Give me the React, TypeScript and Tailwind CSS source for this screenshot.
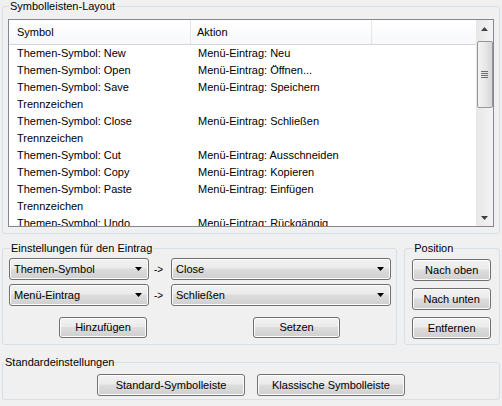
const rows: [string, string][] = [
  ["Themen-Symbol: New", "Menü-Eintrag: Neu"],
  ["Themen-Symbol: Open", "Menü-Eintrag: Öffnen..."],
  ["Themen-Symbol: Save", "Menü-Eintrag: Speichern"],
  ["Trennzeichen", ""],
  ["Themen-Symbol: Close", "Menü-Eintrag: Schließen"],
  ["Trennzeichen", ""],
  ["Themen-Symbol: Cut", "Menü-Eintrag: Ausschneiden"],
  ["Themen-Symbol: Copy", "Menü-Eintrag: Kopieren"],
  ["Themen-Symbol: Paste", "Menü-Eintrag: Einfügen"],
  ["Trennzeichen", ""],
  ["Themen-Symbol: Undo", "Menü-Eintrag: Rückgängig"],
];

const btn =
  "rounded-[3px] border border-[#707070] bg-[linear-gradient(#f2f2f2_0%,#ebebeb_45%,#dddddd_50%,#cfcfcf_100%)] text-[11px] leading-none text-black shadow-[inset_0_0_0_1px_#fcfcfc]";

function Group({ label, className, children }: { label: string; className?: string; children: React.ReactNode }) {
  return (
    <fieldset className={`rounded-[3px] border border-[#d5dfe5] ${className ?? ""}`}>
      <legend className="ml-[1px] px-[1px] text-[11px] leading-[13px] text-black">{label}</legend>
      {children}
    </fieldset>
  );
}

function Arrow({ up }: { up?: boolean }) {
  return (
    <svg width="7" height="4" viewBox="0 0 7 4">
      <path d={up ? "M0 4 L3.5 0 L7 4 Z" : "M0 0 L7 0 L3.5 4 Z"} fill="#404040" />
    </svg>
  );
}

function Combo({ value, width }: { value: string; width: string }) {
  return (
    <div className={`${btn} ${width} flex h-[22px] items-center justify-between pl-[4px] pr-[6px]`}>
      <span>{value}</span>
      <svg width="7" height="4" viewBox="0 0 7 4">
        <path d="M0 0 L7 0 L3.5 4 Z" fill="#000" />
      </svg>
    </div>
  );
}

export default function App() {
  return (
    <div className="h-[406px] w-[502px] overflow-hidden bg-[#f0f0f0] px-[2px] text-[11px] text-black [font-family:'Liberation_Sans',Arial,sans-serif]">
      <Group label="Symbolleisten-Layout" className="px-[5px] pb-[6px]">
        <div className="mt-[6px] flex h-[208px] border border-[#828790] bg-white">
          <div className="flex-1 overflow-hidden">
            <div className="flex h-[25px] border-b border-[#d5d5d5] bg-[linear-gradient(#ffffff,#f7f8fa)]">
              <div className="flex w-[182px] items-center border-r border-[#e3e5e8] pl-[8px]">Symbol</div>
              <div className="flex w-[181px] items-center border-r border-[#e3e5e8] pl-[6px]">Aktion</div>
              <div className="flex-1" />
            </div>
            {rows.map(([a, b], i) => (
              <div key={i} className="flex h-[17px] items-center">
                <div className="w-[182px] pl-[8px] whitespace-nowrap">{a}</div>
                <div className="w-[181px] pl-[7px] whitespace-nowrap">{b}</div>
              </div>
            ))}
          </div>
          <div className="flex w-[17px] flex-col items-center bg-[linear-gradient(90deg,#e7e7e7,#f3f3f3)]">
            <div className="flex h-[17px] w-full items-center justify-center">
              <Arrow up />
            </div>
            <div className="mt-[4px] flex h-[67px] w-[16px] items-center justify-center rounded-[2px] border border-[#979797] bg-[linear-gradient(90deg,#f3f3f3,#e8e8e8_50%,#d6d6d6)]">
              <div className="flex flex-col gap-[1px]">
                <div className="h-px w-[7px] bg-[#6f6f6f]" />
                <div className="h-px w-[7px] bg-[#6f6f6f]" />
                <div className="h-px w-[7px] bg-[#6f6f6f]" />
                <div className="h-px w-[7px] bg-[#6f6f6f]" />
              </div>
            </div>
            <div className="flex-1" />
            <div className="flex h-[17px] w-full items-center justify-center">
              <Arrow />
            </div>
          </div>
        </div>
      </Group>

      <div className="mt-[8px] flex gap-[7px]">
        <Group label="Einstellungen für den Eintrag" className="w-[396px] pb-[6px] pl-[6px]">
          <div className="mt-[3px] flex flex-col gap-[4px]">
            <div className="flex items-center">
              <Combo value="Themen-Symbol" width="w-[140px]" />
              <span className="w-[22px] pl-[5px] text-[10px]">-&gt;</span>
              <Combo value="Close" width="w-[220px]" />
            </div>
            <div className="flex items-center">
              <Combo value="Menü-Eintrag" width="w-[140px]" />
              <span className="w-[22px] pl-[5px] text-[10px]">-&gt;</span>
              <Combo value="Schließen" width="w-[220px]" />
            </div>
          </div>
          <div className="mt-[11px] flex">
            <button className={`${btn} ml-[50px] h-[21px] w-[88px]`}>Hinzufügen</button>
            <button className={`${btn} ml-[106px] h-[21px] w-[87px]`}>Setzen</button>
          </div>
        </Group>
        <Group label="Position" className="w-[96px] pb-[5px] pl-[7px]">
          <div className="mt-[4px] flex flex-col gap-[7px]">
            <button className={`${btn} h-[22px] w-[79px]`}>Nach oben</button>
            <button className={`${btn} h-[22px] w-[79px]`}>Nach unten</button>
            <button className={`${btn} h-[22px] w-[79px]`}>Entfernen</button>
          </div>
        </Group>
      </div>

      <Group label="Standardeinstellungen" className="mt-[11px] pb-[3px]">
        <div className="mt-[5px] flex gap-[12px] pl-[94px]">
          <button className={`${btn} h-[22px] w-[148px]`}>Standard-Symbolleiste</button>
          <button className={`${btn} h-[22px] w-[148px]`}>Klassische Symbolleiste</button>
        </div>
      </Group>
    </div>
  );
}
